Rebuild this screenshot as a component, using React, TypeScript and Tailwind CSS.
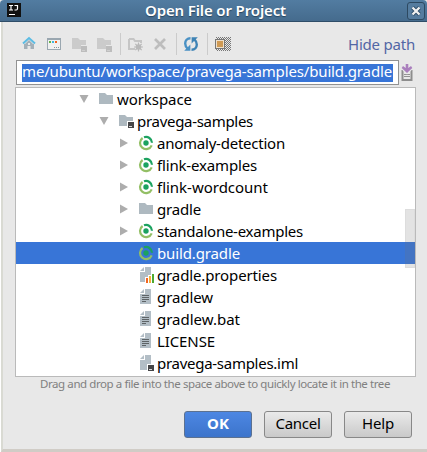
import { useLayoutEffect, useRef, useState } from 'react';
import type { ReactNode } from 'react';

/* Text tracked so that it fills a given width. */
function Fit({ text, width, className = '' }: { text: string; width: number; className?: string }) {
  const ref = useRef<HTMLSpanElement>(null);
  const [spacing, setSpacing] = useState(0);
  useLayoutEffect(() => {
    if (!ref.current) return;
    ref.current.style.letterSpacing = '0px';
    const natural = ref.current.getBoundingClientRect().width;
    const next = (width - natural) / text.length;
    ref.current.style.letterSpacing = `${next}px`;
    setSpacing(next);
  }, [text, width]);
  return (
    <span ref={ref} className={`inline-block whitespace-nowrap ${className}`} style={{ letterSpacing: spacing }}>
      {text}
    </span>
  );
}

function Svg({ w, h, children, className = '' }: { w: number; h: number; children: ReactNode; className?: string }) {
  return (
    <svg width={w} height={h} viewBox={`0 0 ${w} ${h}`} className={`block shrink-0 ${className}`}>
      {children}
    </svg>
  );
}

const folderPath = 'M1 2h6l2 2h6v9H1z';

function HomeIcon() {
  return (
    <Svg w={16} h={16}>
      <path d="M4 8l4-4 4 4h1v5H9.500V10h-3v3H3V8z" fill="#a3afb7" />
      <path d="M7 7h2v2H7z" fill="#e8e8e8" />
      <path d="M2 7.500L8 2l6 5.500" fill="none" stroke="#5bbce4" strokeWidth="2" />
    </Svg>
  );
}

function WindowIcon() {
  return (
    <Svg w={16} h={16}>
      <path d="M1 2h14v12H1z" fill="#9aa7b0" />
      <path d="M2 4h12v9H2z" fill="#f1f1f1" />
      <path d="M3 5h2v2H3z" fill="#62b543" />
      <path d="M6 5h2v2H6z" fill="#40b6e0" />
      <path d="M9 5h2v2H9z" fill="#f26522" />
      <path d="M8 11h1v1H8zM10 11h1v1h-1zM12 11h1v1h-1z" fill="#87939a" />
    </Svg>
  );
}

function DisabledFolder() {
  return (
    <Svg w={16} h={16}>
      <path d="M0 2h6l2 2h6v5H9v4H0z" fill="#cbcbcb" />
      <path d="M9 10h6v6H9z" fill="#bdbdbd" />
      <path d="M10 14h3v1h-3z" fill="#cfcfcf" />
    </Svg>
  );
}

function NewFolder() {
  return (
    <Svg w={16} h={16}>
      <path d="M1 3h4.500l1.500 2h6v2M7 13H1V3" fill="none" stroke="#c5c5c5" strokeWidth="2" />
      <path d="M10.500 6.500v9M6 11h9M7.300 7.800l6.400 6.400M13.700 7.800l-6.400 6.400" stroke="#b9b9b9" strokeWidth="1.200" />
      <circle cx="10.500" cy="11" r="2.800" fill="#b9b9b9" />
    </Svg>
  );
}

function RefreshIcon() {
  return (
    <Svg w={16} h={16}>
      <path d="M7.500 2.300C4 2.300 2.200 4.800 2.200 7.500c0 2 .8 3.500 2.300 4.800" fill="none" stroke="#4a91c4" strokeWidth="2.400" />
      <path d="M1.200 14.800h6.200V8.600z" fill="#4a91c4" />
      <path d="M8.500 13.700c3.500 0 5.300-2.500 5.300-5.200 0-2-.8-3.500-2.300-4.800" fill="none" stroke="#3e83b5" strokeWidth="2.400" />
      <path d="M14.800 1.200H8.600v6.200z" fill="#3e83b5" />
    </Svg>
  );
}

function HiddenFilesIcon() {
  return (
    <Svg w={16} h={16}>
      <defs>
        <pattern id="dither" width="2" height="2" patternUnits="userSpaceOnUse">
          <path d="M0 0h1v1H0zM1 1h1v1H1z" fill="#777" shapeRendering="crispEdges" />
        </pattern>
      </defs>
      <path d="M1 1h15v14H1z" fill="url(#dither)" />
      <path d="M0 3h10v10H0z" fill="#777" />
      <path d="M1 4h8v8H1z" fill="#eee0cc" />
      <path d="M2 5h6v6H2z" fill="#cf9a54" />
    </Svg>
  );
}

function HistoryIcon() {
  return (
    <Svg w={12} h={17}>
      <path d="M.5 6h2v9h7V6h2v11H.5z" fill="#8d8d8d" />
      <path d="M3 10h6v1H3zM3 12h6v1H3z" fill="#929292" />
      <path d="M4.500 0h3v4.500H11v1.300L6 10.500 1 5.800V4.500h3.500z" fill="#e8e8e8" />
      <path d="M4.700 0h2.600v4l2.700-2 1.300 2L6 9 .7 4 2 2l2.700 2z" fill="#aa7fbd" />
    </Svg>
  );
}

type Kind = 'folder' | 'module' | 'gradle' | 'props' | 'text' | 'iml';

function FileIcon({ kind }: { kind: Kind }) {
  if (kind === 'folder' || kind === 'module')
    return (
      <Svg w={16} h={16}>
        <path d={folderPath} fill="#aeb9c0" />
        {kind === 'module' && (
          <>
            <path d="M9 8h7v8H9z" fill="#fff" />
            <path d="M10 9h6v6h-6z" fill="#454547" />
            <path d="M11 13h3v1h-3z" fill="#d8d8d8" />
          </>
        )}
      </Svg>
    );
  if (kind === 'gradle')
    return (
      <Svg w={16} h={16}>
        <path d="M4.600 3A6 6 0 0 0 4.200 12.600A6 6 0 0 0 13.700 10.300" fill="none" stroke="#93bf65" strokeWidth="2.200" />
        <path d="M6 2.300A6 6 0 0 1 14 7.800" fill="none" stroke="#1ca260" strokeWidth="2.200" />
        <circle cx="8" cy="8" r="2.700" fill="#1ca260" />
      </Svg>
    );
  return (
    <Svg w={16} h={16}>
      <path d="M7 0h6v15H2V5h5z" fill="#b3bec6" />
      <path d="M6 0v4H2z" fill="#b3bec6" />
      {kind === 'text' && <path d="M4 6h7v1H4zM4 8h7v1H4zM4 10h7v1H4zM4 12h4v1H4z" fill="#5e6467" />}
      {kind === 'props' && (
        <>
          <path d="M7 10h3V8h3V6h3v9H7z" fill="#fff" />
          <path d="M8 11h2v5H8z" fill="#f26522" />
          <path d="M11 9h2v7h-2z" fill="#f4af3d" />
          <path d="M14 7h2v9h-2z" fill="#4daa30" />
        </>
      )}
      {kind === 'iml' && (
        <>
          <path d="M9 9h7v7H9z" fill="#fff" />
          <path d="M10 10h6v6h-6z" fill="#454547" />
          <path d="M11 14h3v1h-3z" fill="#d8d8d8" />
        </>
      )}
    </Svg>
  );
}

function Arrow({ open }: { open: boolean }) {
  return (
    <Svg w={10} h={10}>
      <path d={open ? 'M.5 1h9L5 9z' : 'M1 .5v9L9 5z'} fill="#adadad" />
    </Svg>
  );
}

type Row = { name: string; width: number; kind: Kind; indent: string; arrow?: 'open' | 'closed'; selected?: boolean };

const rows: Row[] = [
  { name: 'workspace', width: 75, kind: 'folder', indent: 'pl-[63px]', arrow: 'open' },
  { name: 'pravega-samples', width: 116, kind: 'module', indent: 'pl-[83px]', arrow: 'open' },
  { name: 'anomaly-detection', width: 128, kind: 'gradle', indent: 'pl-[103px]', arrow: 'closed' },
  { name: 'flink-examples', width: 100, kind: 'gradle', indent: 'pl-[103px]', arrow: 'closed' },
  { name: 'flink-wordcount', width: 111, kind: 'gradle', indent: 'pl-[103px]', arrow: 'closed' },
  { name: 'gradle', width: 44, kind: 'folder', indent: 'pl-[103px]', arrow: 'closed' },
  { name: 'standalone-examples', width: 146, kind: 'gradle', indent: 'pl-[103px]', arrow: 'closed' },
  { name: 'build.gradle', width: 83, kind: 'gradle', indent: 'pl-[103px]', selected: true },
  { name: 'gradle.properties', width: 120, kind: 'props', indent: 'pl-[103px]' },
  { name: 'gradlew', width: 56, kind: 'text', indent: 'pl-[103px]' },
  { name: 'gradlew.bat', width: 83, kind: 'text', indent: 'pl-[103px]' },
  { name: 'LICENSE', width: 58, kind: 'text', indent: 'pl-[103px]' },
  { name: 'pravega-samples.iml', width: 141, kind: 'iml', indent: 'pl-[103px]' },
];

function TreeRow({ row }: { row: Row }) {
  return (
    <div className={`flex h-[22px] items-center ${row.indent} ${row.selected ? 'bg-[#3875d7] text-white' : 'text-black'}`}>
      <div className="w-[19px] shrink-0">{row.arrow && <Arrow open={row.arrow === 'open'} />}</div>
      <FileIcon kind={row.kind} />
      <Fit text={row.name} width={row.width} className="ml-[3px] leading-[22px]" />
    </div>
  );
}

function Separator() {
  return <div className="h-[22px] w-px bg-[#cbcbcb]" />;
}

export default function App() {
  return (
    <div className="flex h-[452px] w-[427px] flex-col overflow-hidden bg-[#e8e8e8] font-['Noto_Sans',sans-serif] text-[15px]">
      <header className="flex h-[22px] shrink-0 items-center rounded-t-[4px] border-b border-[#2f4d68] bg-linear-to-b from-[#527ca1] to-[#456b8d] pl-[7px]">
        <Svg w={14} h={14} className="mt-[-1px]">
          <path d="M0 0h14v14H0z" fill="#111" />
          <path d="M2 2.500h4M4 2.500v4M2 7h4M7.500 2.500h3v3q0 1.500-1.300 1.500H7.500" fill="none" stroke="#fff" strokeWidth="1.200" />
          <path d="M2 11h6v1H2z" fill="#fff" />
        </Svg>
        <div className="ml-[124px] flex flex-1 pb-[2px] text-white [text-shadow:0_1px_1px_#26445f]">
          <Fit text="Open File or Project" width={141} className="leading-5 font-semibold" />
        </div>
        <div className="mr-[2px] flex h-[18px] w-[18px] items-center justify-center rounded-[3px] border border-[#2d4961] bg-[#557c9f]">
          <Svg w={10} h={10}>
            <path d="M1.500 1.500l7 7M8.500 1.500l-7 7" stroke="#2e4d69" strokeWidth="4" />
            <path d="M1.500 1.500l7 7M8.500 1.500l-7 7" stroke="#f1f1f1" strokeWidth="2.300" />
          </Svg>
        </div>
      </header>

      <div className="flex flex-1 border-l border-white">
        <main className="flex flex-1 flex-col border-b-[3px] border-l-2 border-b-[#d0ccc6] border-l-[#d9dad3] pr-[11px] pl-[12px]">
          <div className="flex h-[38px] shrink-0 items-center pt-[6px] pl-[6px]">
            <HomeIcon />
            <div className="ml-[9px]"><WindowIcon /></div>
            <div className="ml-[10px]"><DisabledFolder /></div>
            <div className="mr-[7px] ml-[9px]"><DisabledFolder /></div>
            <Separator />
            <div className="ml-[7px]"><NewFolder /></div>
            <div className="mr-[9px] ml-[9px]">
              <Svg w={14} h={16}>
                <path d="M2 3l10 10M12 3L2 13" stroke="#bdbdbd" strokeWidth="2.700" />
              </Svg>
            </div>
            <Separator />
            <div className="mr-[8px] ml-[6px]"><RefreshIcon /></div>
            <Separator />
            <div className="ml-[7px]"><HiddenFilesIcon /></div>
            <Fit text="Hide path" width={67} className="ml-[117px] leading-[22px] text-[#5266a5]" />
          </div>

          <div className="flex h-[25px] shrink-0 items-center">
            <div className="ml-px flex h-[25px] w-[383px] items-center border border-[#929292] bg-white px-[5px]">
              <div className="flex h-[18px] w-[371px] items-center bg-[#3875d7] pb-[3px] text-white">
                <Fit text="me/ubuntu/workspace/pravega-samples/build.gradle" width={370} className="leading-[22px]" />
              </div>
            </div>
            <div className="ml-[2px]"><HistoryIcon /></div>
          </div>

          <div className="relative mt-[2px] h-[290px] w-[401px] shrink-0 overflow-hidden border border-[#bababa] bg-white">
            {rows.map((row) => (
              <TreeRow key={row.name} row={row} />
            ))}
            <div className="absolute top-[121px] right-0 h-[59px] w-[10px] border border-[#737373]/5 bg-[#737373]/20" />
          </div>

          <div className="flex h-[15px] shrink-0 pl-[25px] text-[11.5px] text-[#808080]">
            <Fit text="Drag and drop a file into the space above to quickly locate it in the tree" width={350} className="leading-[14px]" />
          </div>

          <div className="mt-[19px] flex justify-end gap-3 pr-[4px]">
            <button className="flex h-[27px] w-[68px] items-start justify-center rounded-[3px] border border-[#5c7190] bg-linear-to-b from-[#4d87e3] to-[#3c74cb] leading-[23px] font-bold text-white">
              <Fit text="OK" width={22} />
            </button>
            <button className="flex h-[27px] w-[68px] items-start justify-center rounded-[3px] border border-[#888] bg-linear-to-b from-[#eaeaea] to-[#c9c9c9] leading-[23px] text-black">
              <Fit text="Cancel" width={45} />
            </button>
            <button className="flex h-[27px] w-[68px] items-start justify-center rounded-[3px] border border-[#888] bg-linear-to-b from-[#eaeaea] to-[#c9c9c9] leading-[23px] text-black">
              <Fit text="Help" width={32} />
            </button>
          </div>
        </main>
      </div>
    </div>
  );
}
